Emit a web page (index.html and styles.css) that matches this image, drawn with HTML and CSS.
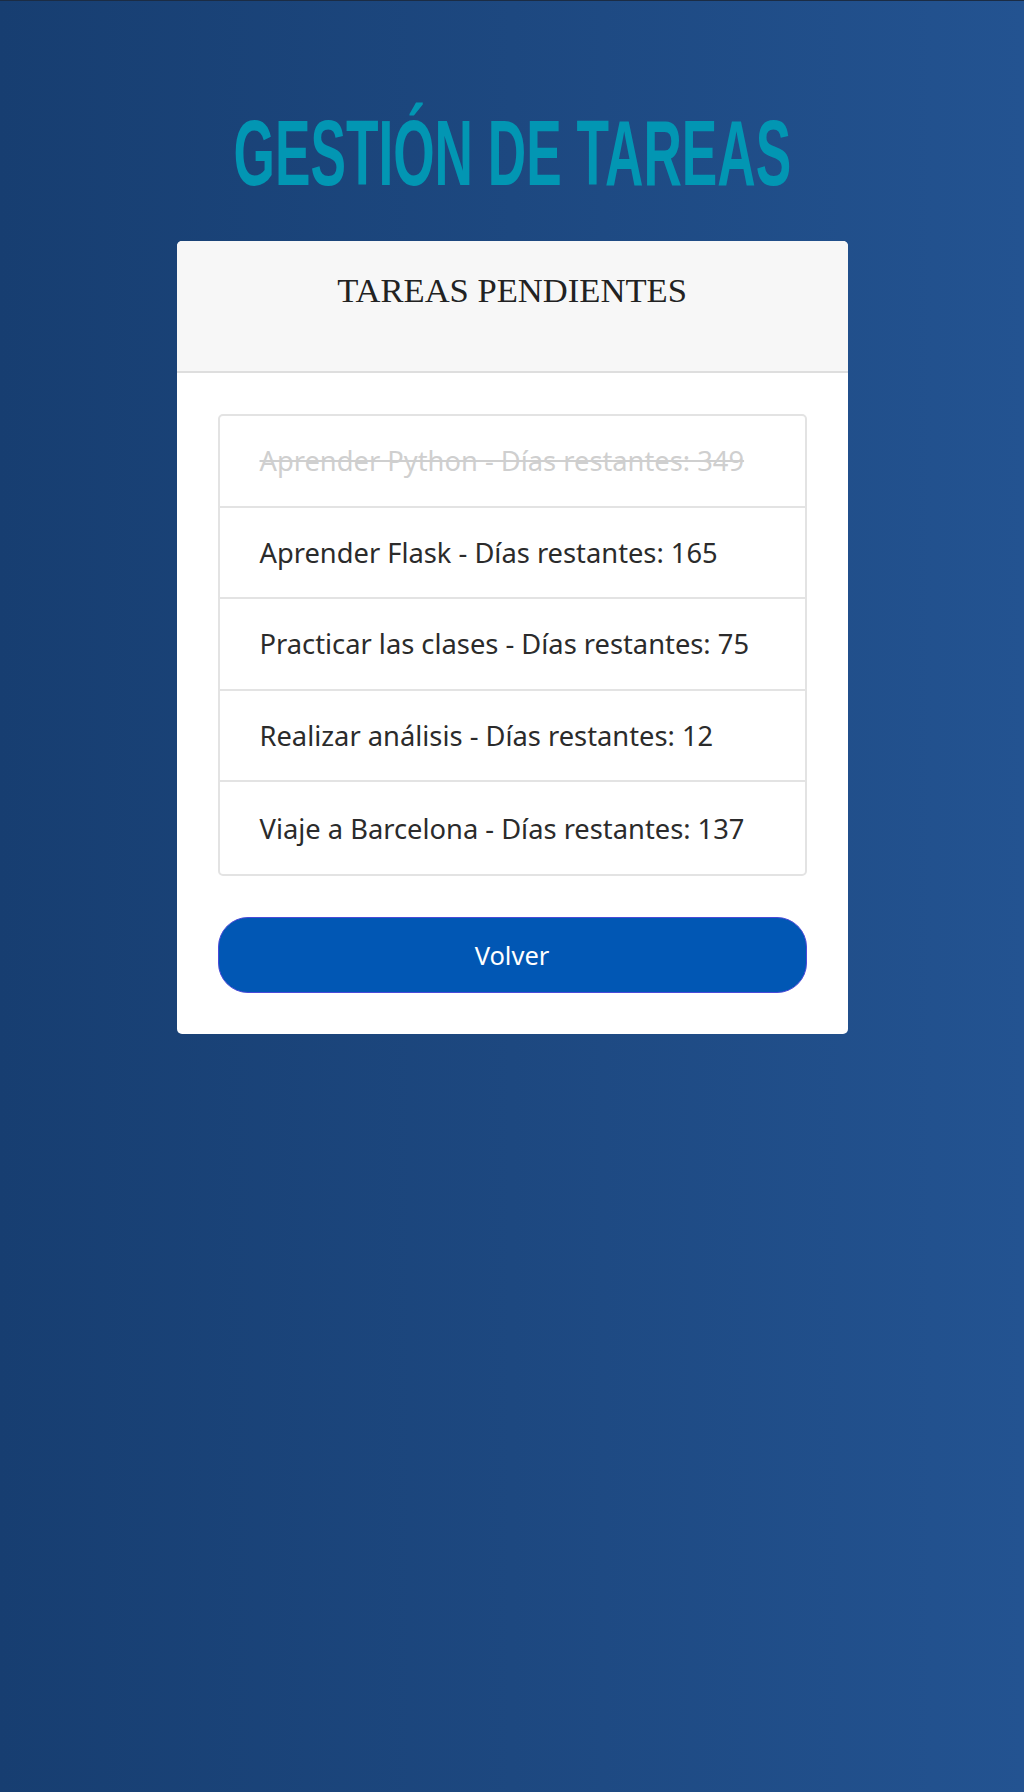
FILE: index.html
```html
<!DOCTYPE html>
<html lang="es">
<head>
<meta charset="utf-8">
<title>Gestión de tareas</title>
<link rel="stylesheet" href="styles.css">
</head>
<body>
<main class="page">
  <h1 class="title"><span class="title-text">GESTIÓN DE TAREAS</span></h1>
  <section class="card">
    <header class="card-header">
      <h2 class="card-title">TAREAS PENDIENTES</h2>
    </header>
    <div class="card-body">
      <ul class="list">
        <li class="item done">Aprender Python - Días restantes: 349</li>
        <li class="item">Aprender Flask - Días restantes: 165</li>
        <li class="item">Practicar las clases - Días restantes: 75</li>
        <li class="item">Realizar análisis - Días restantes: 12</li>
        <li class="item">Viaje a Barcelona - Días restantes: 137</li>
      </ul>
      <button class="btn" type="button">Volver</button>
    </div>
  </section>
</main>
</body>
</html>
```

FILE: styles.css
```css
html, body {
  margin: 0;
  padding: 0;
}
body {
  min-height: 1792px;
  background: linear-gradient(to right, #173e71 0%, #1d4880 50%, #235391 100%);
  border-top: 1px solid #1b2c44;
  box-sizing: border-box;
  font-family: "Noto Sans", "Open Sans", sans-serif;
}
.page {
  display: flex;
  flex-direction: column;
  align-items: center;
  padding-top: 106px;
}
.title {
  margin: 0;
  height: 134px;
  display: flex;
  justify-content: center;
  align-items: flex-start;
}
.title-text {
  display: inline-block;
  font-family: "Liberation Sans", sans-serif;
  font-weight: bold;
  font-size: 93px;
  line-height: 1;
  color: #0296b3;
  transform: scaleX(0.572);
  white-space: nowrap;
}
.card {
  width: 671px;
  background: #fff;
  border-radius: 5px;
  overflow: hidden;
}
.card-header {
  background: #f7f7f7;
  border-bottom: 2px solid #dedede;
  height: 130px;
  box-sizing: content-box;
  padding: 0;
  display: flex;
  justify-content: center;
}
.card-title {
  margin: 29px 0 0;
  font-family: "Liberation Serif", serif;
  font-weight: normal;
  font-size: 34.6px;
  line-height: 40px;
  color: #222;
}
.card-body {
  padding: 41px;
  display: flex;
  flex-direction: column;
  gap: 41px;
}
.list {
  list-style: none;
  margin: 0;
  padding: 0;
  border: 2px solid #e3e3e3;
  border-radius: 5px;
}
.item {
  height: 91.6px;
  box-sizing: border-box;
  padding: 0 40px;
  display: flex;
  align-items: center;
  font-size: 27.3px;
  color: #2b2b2b;
  border-bottom: 2px solid #e3e3e3;
}
.item:last-child {
  border-bottom: none;
}
.item.done {
  color: #cfcfcf;
  text-decoration: line-through;
}
.btn {
  height: 76px;
  border: 1px solid #4a4ad8;
  border-radius: 30px;
  background: #0157b4;
  color: #fff;
  font-family: "Noto Sans", "Open Sans", sans-serif;
  font-size: 25.5px;
  cursor: pointer;
}
```
